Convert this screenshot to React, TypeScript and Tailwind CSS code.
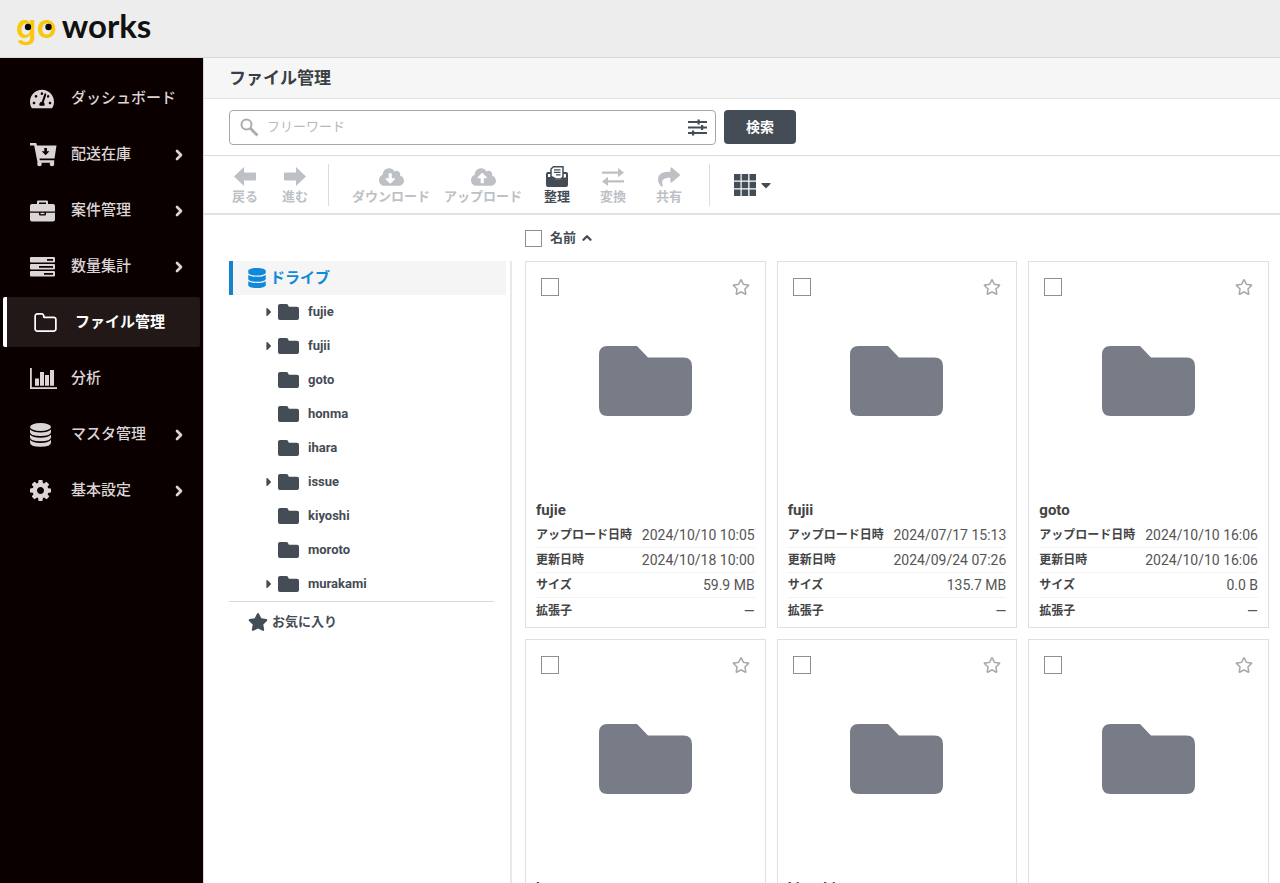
import type { ReactNode } from 'react';
import {
  FaCaretDown,
  FaCaretRight,
  FaCloudDownloadAlt,
  FaCloudUploadAlt,
  FaDatabase,
  FaRegStar,
  FaShare,
  FaStar,
  FaTachometerAlt,
} from 'react-icons/fa';
import { ChevronRight, ChevronUp } from 'lucide-react';

const navItems = [
  { label: 'ダッシュボード', icon: <FaTachometerAlt className="w-6 h-6" />, children: false },
  { label: '配送在庫', icon: <CartIcon />, children: true },
  { label: '案件管理', icon: <BriefcaseIcon />, children: true },
  { label: '数量集計', icon: <TasksIcon />, children: true },
  { label: 'ファイル管理', icon: <FolderOutlineIcon />, children: false, active: true },
  { label: '分析', icon: <BarChartIcon />, children: false },
  { label: 'マスタ管理', icon: <DiscsIcon />, children: true },
  { label: '基本設定', icon: <GearIcon />, children: true },
];

const folders = [
  { name: 'fujie', expandable: true },
  { name: 'fujii', expandable: true },
  { name: 'goto', expandable: false },
  { name: 'honma', expandable: false },
  { name: 'ihara', expandable: false },
  { name: 'issue', expandable: true },
  { name: 'kiyoshi', expandable: false },
  { name: 'moroto', expandable: false },
  { name: 'murakami', expandable: true },
];

const files = [
  { name: 'fujie', uploaded: '2024/10/10 10:05', updated: '2024/10/18 10:00', size: '59.9 MB' },
  { name: 'fujii', uploaded: '2024/07/17 15:13', updated: '2024/09/24 07:26', size: '135.7 MB' },
  { name: 'goto', uploaded: '2024/10/10 16:06', updated: '2024/10/10 16:06', size: '0.0 B' },
  { name: 'honma', uploaded: '2024/10/10 16:06', updated: '2024/10/10 16:06', size: '0.0 B' },
  { name: 'kiyoshi', uploaded: '2024/10/10 16:06', updated: '2024/10/10 16:06', size: '0.0 B' },
  { name: 'moroto', uploaded: '2024/10/10 16:06', updated: '2024/10/10 16:06', size: '0.0 B' },
];

function CartIcon() {
  return (
    <svg viewBox="0 0 27 25" className="w-[27px] h-[25px]" fill="currentColor">
      <path d="M0 1h6.2l.8 2.5h19.5l-2 13H9.5l.3 1.8h14.4v2.4H7.6L4.2 3.6H0z" />
      <circle cx="9.5" cy="22" r="2.3" />
      <circle cx="22" cy="22" r="2.3" />
      <path d="M14.3 6h2.6v3.2h2.6l-3.9 4-3.9-4h2.6z" fill="#0b0000" />
    </svg>
  );
}

function BriefcaseIcon() {
  return (
    <svg viewBox="0 0 25 22" className="w-[25px] h-[22px]" fill="currentColor">
      <path
        fillRule="evenodd"
        d="M7 4V1.8Q7 .5 8.300.5h8.400Q18 .5 18 1.8V4h5q2 0 2 2v5.400H0V6q0-2 2-2zM9 4h7V2.400H9z"
      />
      <path d="M0 12.800h9v1.400q0 1.200 1.200 1.200h4.600q1.200 0 1.200-1.200v-1.400h9v6.700q0 2-2 2H2q-2 0-2-2z" />
      <path d="M10.500 12.800h4v1.400h-4z" />
    </svg>
  );
}

function TasksIcon() {
  return (
    <svg viewBox="0 0 25 20" className="w-[25px] h-5" fill="currentColor">
      <path
        fillRule="evenodd"
        d="M1 0h23q1 0 1 1v3.500q0 1-1 1H1q-1 0-1-1V1q0-1 1-1zM17 2v1.800h6V2zM1 7h23q1 0 1 1v3.500q0 1-1 1H1q-1 0-1-1V8q0-1 1-1zM9 9v1.800h14V9zM1 14h23q1 0 1 1v3.500q0 1-1 1H1q-1 0-1-1V15q0-1 1-1zM14 16v1.800h9V16z"
      />
    </svg>
  );
}

function FolderOutlineIcon() {
  return (
    <svg viewBox="64 128 1664 1408" className="w-[23px] h-[19px]" fill="currentColor">
      <path d="M1600 1312v-704q0-40-28-68t-68-28h-704q-40 0-68-28t-28-68v-64q0-40-28-68t-68-28h-320q-40 0-68 28t-28 68v960q0 40 28 68t68 28h1216q40 0 68-28t28-68zm128-704v704q0 92-66 158t-158 66h-1216q-92 0-158-66t-66-158v-960q0-92 66-158t158-66h320q92 0 158 66t66 158v32h672q92 0 158 66t66 158z" />
    </svg>
  );
}

function BarChartIcon() {
  return (
    <svg viewBox="0 0 27 21" className="w-[27px] h-[21px]" fill="currentColor">
      <path d="M0 0h1.800v19.200H27V21H0zM5 10.500h4v7.300H5zM10 4h4v13.800h-4zM15 7h4v10.800h-4zM20 2h4v15.800h-4z" />
    </svg>
  );
}

function DiscsIcon() {
  return (
    <svg viewBox="0 0 21 24" className="w-[21px] h-6" fill="currentColor">
      <ellipse cx="10.500" cy="4" rx="10.500" ry="4" />
      <path d="M0 6.500q3 3 10.500 3t10.500-3V9q0 4-10.500 4T0 9z" />
      <path d="M0 11.700q3 3 10.500 3t10.500-3v2.500q0 4-10.500 4t-10.500-4z" />
      <path d="M0 17q3 3 10.500 3T21 17v2.500q0 4.200-10.500 4.200T0 19.500z" />
    </svg>
  );
}

function GearIcon() {
  return (
    <svg viewBox="128 128 1536 1536" className="w-[21px] h-[21px]" fill="currentColor">
      <path d="M1152 896q0-106-75-181t-181-75-181 75-75 181 75 181 181 75 181-75 75-181zm512-109v222q0 12-8 23t-20 13l-185 28q-19 54-39 91 35 50 107 138 10 12 10 25t-9 23q-27 37-99 108t-94 71q-12 0-26-9l-138-108q-44 23-91 38-16 136-29 186-7 28-36 28h-222q-14 0-24.500-8.500t-11.500-21.500l-28-184q-49-16-90-37l-141 107q-10 9-25 9-14 0-25-11-126-114-165-168-7-10-7-23 0-12 8-23 15-21 51-66.500t54-70.500q-27-50-41-99l-183-27q-13-2-21-12.500t-8-23.500v-222q0-12 8-23t19-13l186-28q14-46 39-92-40-57-107-138-10-12-10-24 0-10 9-23 26-36 98.500-107.500t94.500-71.500q13 0 26 10l138 107q44-23 91-38 16-136 29-186 7-28 36-28h222q14 0 24.500 8.500t11.500 21.500l28 184q49 16 90 37l142-107q9-9 24-9 13 0 25 10 129 119 165 170 7 8 7 22 0 12-8 23-15 21-51 66.500t-54 70.500q26 50 41 98l183 28q13 2 21 12.500t8 23.500z" />
    </svg>
  );
}

function SmallFolderIcon() {
  return (
    <svg viewBox="0 0 21 16" className="w-[21px] h-4 shrink-0" fill="currentColor">
      <path d="M2 0h6.500q1.500 0 2 2l.3.700H19q2 0 2 2V14q0 2-2 2H2q-2 0-2-2V2q0-2 2-2z" />
    </svg>
  );
}

function LargeFolderIcon() {
  return (
    <svg viewBox="0 0 93 70" className="w-[93px] h-[70px]" fill="#777c87">
      <path d="M8.500 0H38l11 11.500h35.500q8.500 0 8.500 8.500v41.500q0 8.500-8.500 8.500h-76Q0 70 0 61.500v-53Q0 0 8.500 0z" />
    </svg>
  );
}

function SearchIcon() {
  return (
    <svg viewBox="0 0 19 19" className="w-[19px] h-[19px] shrink-0 text-[#acacac]" fill="none" stroke="currentColor">
      <circle cx="6.500" cy="6.500" r="5" strokeWidth="2" />
      <path d="M10.500 10.500l7 7" strokeWidth="3" />
    </svg>
  );
}

function FilterIcon() {
  return (
    <svg viewBox="0 0 19 17" className="w-[19px] h-[17px]" fill="currentColor">
      <path d="M0 2h19v2H0zM0 7.500h19v2H0zM0 13h19v2H0z" />
      <path d="M9.500.500h2.200v5H9.500zM13 6h2.200v5H13zM4 11.500h2.200v5H4z" />
    </svg>
  );
}

function OrganizeIcon() {
  return (
    <svg viewBox="0 0 22 21" className="w-[22px] h-[21px]">
      <path d="M0 8q0-2 2-2h18q2 0 2 2v11q0 2-2 2H2q-2 0-2-2z" fill="currentColor" />
      <path d="M2 8h18v3.500h-3.500l-1.500 2H9.500L6 11H2z" fill="#fff" />
      <path d="M5 10.500V3l2.500-2.300H17v10l-2 2.300h-5z" fill="#fff" stroke="currentColor" strokeWidth="1.500" />
      <path d="M8 3.800h6.500M8 6.300h6.500M10 8.800h4.500" stroke="currentColor" strokeWidth="1.300" />
    </svg>
  );
}

function ConvertIcon() {
  return (
    <svg viewBox="0 0 22 18" className="w-[22px] h-[18px]" fill="currentColor">
      <path d="M0 3.500h16V0l6 4.600-6 4.600V5.700H0zM22 12.300H6V8.800l-6 4.600L6 18v-3.500h16z" />
    </svg>
  );
}

function ThickArrowIcon({ className = '' }: { className?: string }) {
  return (
    <svg viewBox="0 0 22 19" className={`w-[22px] h-[19px] ${className}`} fill="currentColor">
      <path d="M10 0v5.500h11q1 0 1 1v6q0 1-1 1H10V19L0 9.500z" />
    </svg>
  );
}

function GridIcon() {
  return (
    <svg viewBox="0 0 22 22" className="w-[22px] h-[22px]" fill="currentColor">
      <path d="M0 0h6.500v6.500H0zM7.700 0h6.500v6.500H7.700zM15.500 0H22v6.500h-6.500zM0 7.700h6.500v6.500H0zM7.700 7.700h6.500v6.500H7.700zM15.500 7.700H22v6.500h-6.500zM0 15.500h6.500V22H0zM7.700 15.500h6.500V22H7.700zM15.500 15.500H22V22h-6.500z" />
    </svg>
  );
}

function Logo() {
  return (
    <a href="#" className="flex items-baseline gap-[5px] leading-none">
      <span className="relative font-['Inter',sans-serif] text-[33px] font-semibold text-[#f9c80e]">
        go
        <svg viewBox="0 0 40 40" className="absolute left-0 top-0 w-10 h-10" fill="#0b0b0b">
          <circle cx="12" cy="17" r="3.2" />
          <circle cx="32.500" cy="17" r="3.2" />
        </svg>
      </span>
      <span className="font-['Lato',sans-serif] text-[33px] font-bold text-[#111]">works</span>
    </a>
  );
}

function Sidebar() {
  return (
    <nav className="w-[203px] shrink-0 bg-[#0b0000] pt-[15px] px-[3px] flex flex-col gap-1.5">
      {navItems.map((item) => (
        <a
          key={item.label}
          href="#"
          className={`flex items-center h-[50px] pt-px pr-[13px] text-[15px] ${
            item.active
              ? 'border-l-4 border-white rounded-xs bg-[#231818] pl-[27px] font-bold text-white'
              : 'pl-[27px] font-medium text-[#dcd5d5]'
          }`}
        >
          <span className="w-[41px] shrink-0">{item.icon}</span>
          <span className="grow whitespace-nowrap">{item.label}</span>
          {item.children && <ChevronRight className="w-4 h-4" strokeWidth={4} />}
        </a>
      ))}
    </nav>
  );
}

function ToolButton({
  label,
  icon,
  className,
  disabled = true,
}: {
  label: string;
  icon: ReactNode;
  className: string;
  disabled?: boolean;
}) {
  return (
    <button
      type="button"
      disabled={disabled}
      className={`flex flex-col items-center whitespace-nowrap text-[13px] leading-4 font-bold text-[#444c55] disabled:text-[#bdc1c5] ${className}`}
    >
      <span className="flex h-[25px] items-center">{icon}</span>
      {label}
    </button>
  );
}

function Toolbar() {
  return (
    <div className="flex h-[59px] shrink-0 items-center border-b-2 border-[#e2e2e2] pl-4">
      <ToolButton label="戻る" className="px-3" icon={<ThickArrowIcon />} />
      <ToolButton label="進む" className="px-3" icon={<ThickArrowIcon className="rotate-180" />} />
      <div className="ml-2 mr-4 h-[42px] w-px bg-[#dcdcdc]" />
      <ToolButton label="ダウンロード" className="px-[7px]" icon={<FaCloudDownloadAlt className="w-[25px] h-5" />} />
      <ToolButton label="アップロード" className="px-[7px]" icon={<FaCloudUploadAlt className="w-[25px] h-5" />} />
      <ToolButton label="整理" className="px-[15px]" icon={<OrganizeIcon />} disabled={false} />
      <ToolButton label="変換" className="px-[15px]" icon={<ConvertIcon />} />
      <ToolButton label="共有" className="px-[15px]" icon={<FaShare className="w-[22px] h-[22px]" />} />
      <div className="ml-3 mr-6 h-[42px] w-px bg-[#dcdcdc]" />
      <button type="button" aria-label="表示形式" className="flex items-center gap-0.5 text-[#444c55]">
        <GridIcon />
        <FaCaretDown className="w-4 h-4" />
      </button>
    </div>
  );
}

function FolderTree() {
  return (
    <aside className="w-[283px] shrink-0 border-r-2 border-[#e8e8e8] mt-[46px] pr-1">
      <a
        href="#"
        className="flex h-[34px] items-center gap-1 border-l-4 border-[#1583cc] bg-[#f5f5f5] pl-[15px] text-[15px] font-bold text-[#1089dd]"
      >
        <FaDatabase className="w-[18px] h-5" />
        ドライブ
      </a>
      <ul className="mr-3 border-b border-[#d4dada]">
        {folders.map((folder) => (
          <li key={folder.name}>
            <a href="#" className="flex h-[34px] items-center pl-[33px] text-[13px] font-bold text-[#444c55]">
              <span className="w-4 shrink-0">{folder.expandable && <FaCaretRight className="w-3.5 h-3.5" />}</span>
              <SmallFolderIcon />
              <span className="ml-[9px]">{folder.name}</span>
            </a>
          </li>
        ))}
      </ul>
      <a href="#" className="flex h-10 items-center gap-1 pl-[19px] text-[13px] font-bold text-[#444c55]">
        <FaStar className="w-5 h-[18px]" />
        お気に入り
      </a>
    </aside>
  );
}

function FileCard({ file }: { file: (typeof files)[number] }) {
  const details = [
    ['アップロード日時', file.uploaded],
    ['更新日時', file.updated],
    ['サイズ', file.size],
    ['拡張子', '—'],
  ];

  return (
    <article className="border border-[#e0e0e0] px-2.5 pb-1">
      <div className="flex items-center justify-between px-[5px] pt-4">
        <input
          type="checkbox"
          aria-label={file.name}
          className="appearance-none w-[18px] h-[18px] border border-[#8f8f8f] bg-white checked:bg-[#444c55]"
        />
        <button type="button" aria-label="お気に入り" className="text-[#a8a8a8]">
          <FaRegStar className="w-[18px] h-[18px]" />
        </button>
      </div>
      <div className="flex h-[170px] items-center justify-center">
        <LargeFolderIcon />
      </div>
      <h2 className="mt-8 mb-px text-[15px] leading-6 font-bold text-[#444]">{file.name}</h2>
      <dl>
        {details.map(([label, value]) => (
          <div
            key={label}
            className="flex h-[25px] items-center justify-between border-b border-[#f3f3f3] last:border-b-0"
          >
            <dt className="text-xs font-bold text-[#444]">{label}</dt>
            <dd className="text-sm text-[#555]">{value}</dd>
          </div>
        ))}
      </dl>
    </article>
  );
}

export default function App() {
  return (
    <div className="flex h-screen flex-col overflow-hidden bg-white font-['Roboto','Noto_Sans_CJK_JP',sans-serif]">
      {/* Header */}
      <header className="flex h-[58px] shrink-0 items-center border-b border-[#d8d8d8] bg-[#ededed] px-4 pb-1.5">
        <Logo />
      </header>

      <div className="flex min-h-0 grow">
        <Sidebar />

        <main className="flex min-w-0 grow flex-col border-l border-[#d8d8d8]">
          <div className="flex h-[41px] shrink-0 items-center border-b border-[#e2e2e2] bg-[#f6f6f6] px-[25px] pt-0.5">
            <h1 className="text-[17px] font-bold text-[#3a3f44]">ファイル管理</h1>
          </div>

          {/* Search */}
          <form className="flex h-[57px] shrink-0 items-center gap-2 border-b border-[#dcdcdc] px-[25px]">
            <div className="flex h-[35px] w-[487px] items-center gap-2 rounded-sm border border-[#a8a8a8] pl-2.5 pr-2">
              <SearchIcon />
              <input
                type="text"
                aria-label="フリーワード"
                placeholder="フリーワード"
                className="min-w-0 grow text-[13px] outline-none placeholder:text-[#b8b8b8]"
              />
              <button type="button" aria-label="詳細条件" className="text-[#444c55]">
                <FilterIcon />
              </button>
            </div>
            <button type="submit" className="h-[34px] w-[72px] rounded-sm bg-[#444c55] text-sm font-bold text-white">
              検索
            </button>
          </form>

          <Toolbar />

          <div className="flex min-h-0 grow overflow-hidden pl-[25px]">
            <FolderTree />

            {/* File list */}
            <section className="grow pl-[13px] pr-[11px]">
              <div className="flex h-[46px] items-center gap-2 text-[13px] font-bold text-[#444c55]">
                <input
                  id="select-all"
                  type="checkbox"
                  className="appearance-none w-[17px] h-[17px] border border-[#8f8f8f] bg-white checked:bg-[#444c55]"
                />
                <label htmlFor="select-all">名前</label>
                <ChevronUp className="-ml-1 w-3.5 h-3.5" strokeWidth={4} />
              </div>
              <div className="grid grid-cols-3 gap-[11px]">
                {files.map((file) => (
                  <FileCard key={file.name} file={file} />
                ))}
              </div>
            </section>
          </div>
        </main>
      </div>
    </div>
  );
}
